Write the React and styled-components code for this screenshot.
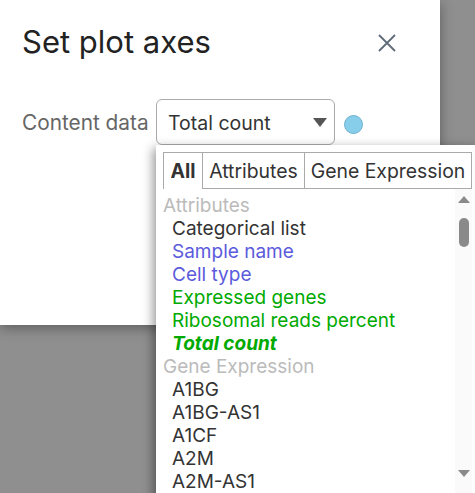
import React from "react";
import styled, { createGlobalStyle } from "styled-components";

const Global = createGlobalStyle`
  html, body { margin: 0; padding: 0; overflow: hidden; }
  body {
    background: #8f8f8f;
    font-family: Inter, "Noto Sans", sans-serif;
    width: 475px;
    height: 493px;
  }
`;

const Page = styled.div`
  position: relative;
  width: 475px;
  height: 493px;
  overflow: hidden;
`;

const Dialog = styled.div`
  width: 440px;
  height: 325px;
  box-sizing: border-box;
  background: #fff;
  padding: 24px 0 0 22px;
  box-shadow: 0 3px 12px rgba(0, 0, 0, 0.35);
`;

const Header = styled.div`
  display: flex;
  align-items: center;
  justify-content: space-between;
  width: 374px;
  height: 36px;
`;

const Title = styled.h1`
  margin: 0;
  font-size: 31px;
  font-weight: 400;
  line-height: 36px;
  color: #222;
`;

const CloseButton = styled.button`
  border: 0;
  background: none;
  padding: 0;
  width: 18px;
  height: 18px;
  display: flex;
  margin-top: 2px;
  cursor: pointer;
`;

const Row = styled.div`
  display: flex;
  align-items: center;
  margin-top: 39px;
  gap: 8px;
`;

const Label = styled.span`
  font-size: 20.8px;
  color: #666;
  width: 126px;
  white-space: nowrap;
`;

const SelectWrap = styled.div`
  position: relative;
`;

const Select = styled.div`
  width: 179px;
  height: 46px;
  box-sizing: border-box;
  border: 1px solid #ababab;
  border-radius: 6px;
  display: flex;
  align-items: center;
  justify-content: space-between;
  padding: 1px 7px 0 11px;
  font-size: 19.5px;
  color: #333;
`;

const Caret = styled.span`
  width: 0;
  height: 0;
  border-left: 7px solid transparent;
  border-right: 7px solid transparent;
  border-top: 9px solid #555;
`;

const Dot = styled.span`
  width: 19px;
  height: 19px;
  box-sizing: border-box;
  border-radius: 50%;
  background: #87ceeb;
  border: 1px solid #6fb0cf;
  margin-left: 1px;
  margin-top: 4px;
`;

const Popup = styled.div`
  position: absolute;
  left: 0;
  top: 46px;
  width: 323px;
  height: 360px;
  box-sizing: border-box;
  padding: 7px;
  background: #fff;
  box-shadow: -3px 3px 10px rgba(0, 0, 0, 0.4);
  display: flex;
  flex-direction: column;
  z-index: 2;
`;

const Tabs = styled.div`
  display: flex;
  height: 37px;
`;

const Tab = styled.div`
  box-sizing: border-box;
  height: 37px;
  width: ${(p) => p.$w}px;
  display: flex;
  align-items: center;
  justify-content: center;
  font-size: 19.4px;
  color: #333;
  white-space: nowrap;
  font-weight: ${(p) => (p.$active ? 700 : 400)};
  border-top: 1px solid #aaa;
  border-left: 1px solid #aaa;
  border-right: ${(p) => (p.$last ? "1px solid #aaa" : "0")};
  border-bottom: ${(p) => (p.$active ? "0" : "1px solid #aaa")};
`;

const Body = styled.div`
  flex: 1;
  display: flex;
  min-height: 0;
`;

const List = styled.div`
  flex: 1;
  overflow: hidden;
  padding-top: 5px;
`;

const GroupHeader = styled.div`
  font-size: 19px;
  line-height: 23px;
  color: #bbb;
  white-space: nowrap;
`;

const Item = styled.div`
  font-size: 19px;
  line-height: 23px;
  padding-left: 9px;
  white-space: nowrap;
  color: ${(p) => p.$color || "#333"};
  font-weight: ${(p) => (p.$selected ? 700 : 400)};
  font-style: ${(p) => (p.$selected ? "italic" : "normal")};
`;

const Scrollbar = styled.div`
  width: 17px;
  background: #fafafa;
  display: flex;
  flex-direction: column;
  align-items: center;
  padding-top: 7px;
`;

const ArrowUp = styled.span`
  width: 0;
  height: 0;
  border-left: 6px solid transparent;
  border-right: 6px solid transparent;
  border-bottom: 7px solid #8a8a8a;
`;

const ArrowDown = styled.span`
  width: 0;
  height: 0;
  border-left: 6px solid transparent;
  border-right: 6px solid transparent;
  border-top: 7px solid #8a8a8a;
`;

const Thumb = styled.span`
  width: 10px;
  height: 29px;
  border-radius: 5px;
  background: #8a8a8a;
  margin-top: 15px;
`;

const Spacer = styled.span`
  height: 223px;
`;

const BLUE = "#5b5bdc";
const GREEN = "#00aa00";

const attributes = [
  { label: "Categorical list" },
  { label: "Sample name", color: BLUE },
  { label: "Cell type", color: BLUE },
  { label: "Expressed genes", color: GREEN },
  { label: "Ribosomal reads percent", color: GREEN },
  { label: "Total count", color: GREEN, selected: true },
];

const genes = ["A1BG", "A1BG-AS1", "A1CF", "A2M", "A2M-AS1", "A2ML1", "A2MP1"];

export default function App() {
  return (
    <Page>
      <Global />
      <Dialog>
        <Header>
          <Title>Set plot axes</Title>
          <CloseButton aria-label="Close">
            <svg width="18" height="18" viewBox="0 0 18 18">
              <path d="M1 1 L17 17 M17 1 L1 17" stroke="#5f6b78" strokeWidth="1.8" fill="none" />
            </svg>
          </CloseButton>
        </Header>
        <Row>
          <Label>Content data</Label>
          <SelectWrap>
            <Select>
              <span>Total count</span>
              <Caret />
            </Select>
            <Popup>
              <Tabs>
                <Tab $active $w={39}>All</Tab>
                <Tab $w={102}>Attributes</Tab>
                <Tab $w={168} $last>Gene Expression</Tab>
              </Tabs>
              <Body>
                <List>
                  <GroupHeader>Attributes</GroupHeader>
                  {attributes.map((a) => (
                    <Item key={a.label} $color={a.color} $selected={a.selected}>
                      {a.label}
                    </Item>
                  ))}
                  <GroupHeader>Gene Expression</GroupHeader>
                  {genes.map((g) => (
                    <Item key={g}>{g}</Item>
                  ))}
                </List>
                <Scrollbar>
                  <ArrowUp />
                  <Thumb />
                  <Spacer />
                  <ArrowDown />
                </Scrollbar>
              </Body>
            </Popup>
          </SelectWrap>
          <Dot />
        </Row>
      </Dialog>
    </Page>
  );
}
